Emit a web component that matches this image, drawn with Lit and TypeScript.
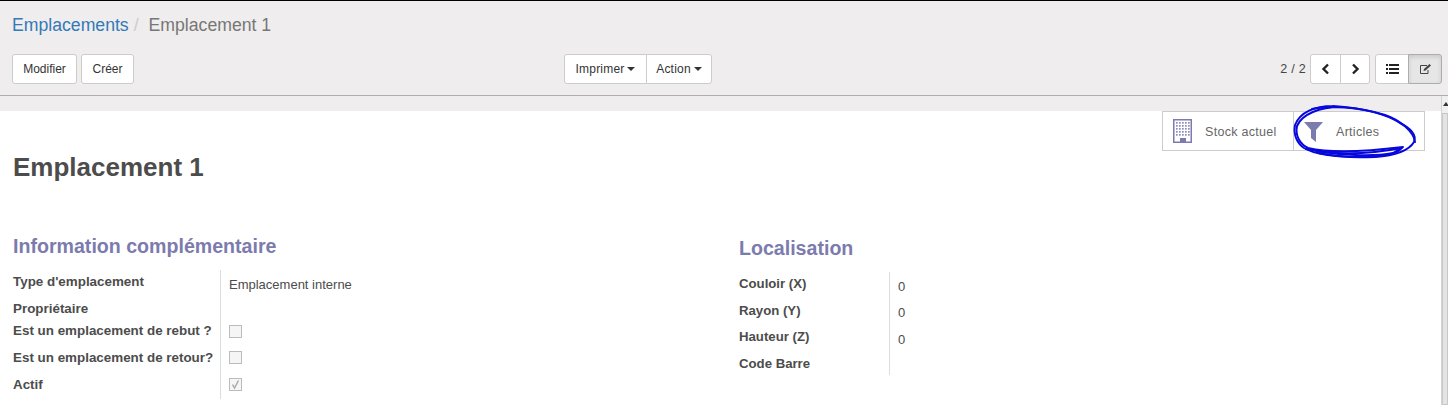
import { LitElement, html, css, svg } from "lit";
import { customElement } from "lit/decorators.js";

@customElement("app-root")
export class AppRoot extends LitElement {
  static styles = css`
    :host { display: block; width: 1448px; height: 405px; overflow: hidden; position: relative; background: #fff;
      font-family: "Liberation Sans", Arial, sans-serif; font-size: 12px; color: #4c4c4c; }
    * { box-sizing: border-box; }
    .panel { height: 96px; background: #efeded; border-top: 1px solid #000; border-bottom: 1px solid #b0aeb3; padding: 15px 6px 0 12px; }
    .crumbs { display: flex; font-size: 17.65px; line-height: 18px; height: 18px; margin-bottom: 20px; }
    .crumbs a { color: #337ab7; }
    .crumbs .sep { color: #ccc; padding: 0 10px 0 5px; }
    .crumbs .cur { color: #777; }
    .bar { display: grid; grid-template-columns: 552px auto 1fr; align-items: center; height: 30px; }
    .left { display: flex; gap: 4px; }
    .right { display: flex; justify-content: flex-end; align-items: center; }
    .btn { display: flex; align-items: center; justify-content: center; height: 30px; background: #fff; border: 1px solid #ccc; color: #333; font-size: 12px; border-radius: 3px; }
    .group { display: flex; }
    .group .btn { border-radius: 0; }
    .group .btn + .btn { margin-left: -1px; }
    .group .btn:first-child { border-radius: 3px 0 0 3px; }
    .group .btn:last-child { border-radius: 0 3px 3px 0; }
    .spaced { letter-spacing: 0.2px; }
    .caret { width: 0; height: 0; border-left: 4px solid transparent; border-right: 4px solid transparent; border-top: 4px solid #333; margin-left: 3px; }
    .pager { color: #444; font-size: 12.5px; margin-right: 4px; letter-spacing: 0.3px; }
    .views { margin-left: 5px; }
    .btn.on { background: #e6e6e6; border-color: #adadad; box-shadow: inset 0 2px 4px rgba(0,0,0,.125); }
    .strip { height: 15px; background: #efeded; margin-right: 7px; }
    .scroll { position: absolute; top: 96px; right: 0; width: 7px; height: 309px; background: #f0f0f0; border-left: 1px solid #d4d4d4; }
    .scroll svg { display: block; margin: 6px 0 0 1px; }
    .thumb { height: 292px; margin-top: 7px; background: #e4e4e4; border: 1px solid #c8c8c8; }
    .sheet { padding: 0 23px 0 13px; }
    .stats { display: flex; justify-content: flex-end; height: 41px; }
    .stat { display: flex; align-items: center; width: 132px; padding-left: 10px; height: 40px; border: 1px solid #ccc; color: #666; font-size: 12.5px; letter-spacing: 0.3px; }
    .stat + .stat { margin-left: -1px; }
    .stat svg { margin-right: 13px; }
    .stat span { padding-top: 1px; }
    .stat.b svg { margin-top: 1px; }
    .title { height: 83px; padding-top: 2px; }
    h1 { margin: 0; font-size: 26px; line-height: 26px; font-weight: 700; color: #4c4c4c; }
    .cols { display: grid; grid-template-columns: 726px 1fr; }
    h2 { margin: 0; font-size: 19.6px; line-height: 22px; font-weight: 700; color: #7c7bad; }
    .loc h2 { margin-top: 2px; }
    .grid { display: grid; margin-top: 13px; }
    .info .grid { grid-template-columns: 208px auto; }
    .loc .grid { grid-template-columns: 151px auto; }
    .k { font-weight: 700; font-size: 13.4px; line-height: 22px; padding-top: 1px; color: #4c4c4c; border-right: 1px solid #ddd; white-space: nowrap; }
    .loc .k { font-size: 13.2px; }
    .v { padding-left: 8px; font-size: 13px; line-height: 16px; color: #4c4c4c; }
    .check { width: 13px; height: 13px; border: 1px solid #bbb; background: #f5f5f5; display: block; }
    .check svg { display: block; }
    .scribble { position: absolute; left: 1290px; top: 100px; pointer-events: none; }
  `;

  private checkbox(on: boolean) {
    return html`<span class="check">${on
      ? html`<svg width="11" height="11" viewBox="0 0 11 11"><path d="M2.5 5.5 L4.5 9 L8.5 1.5" fill="none" stroke="#aaa" stroke-width="1.5"/></svg>`
      : ""}</span>`;
  }

  render() {
    const info: [string, unknown, number, number][] = [
      ["Type d'emplacement", "Emplacement interne", 27, 7],
      ["Propriétaire", "", 22, 0],
      ["Est un emplacement de rebut ?", this.checkbox(false), 27, 6],
      ["Est un emplacement de retour?", this.checkbox(false), 27, 5],
      ["Actif", this.checkbox(true), 26, 5],
    ];
    const loc: [string, string, number, number][] = [
      ["Couloir (X)", "0", 27, 7],
      ["Rayon (Y)", "0", 26, 6],
      ["Hauteur (Z)", "0", 27, 7],
      ["Code Barre", "", 23, 0],
    ];
    const row = ([k, v, h, p]: [string, unknown, number, number]) =>
      html`<div class="k" style="height:${h}px">${k}</div><div class="v" style="height:${h}px;padding-top:${p}px">${v}</div>`;
    return html`
      <div class="panel">
        <div class="crumbs"><a>Emplacements</a><span class="sep">/</span><span class="cur">Emplacement 1</span></div>
        <div class="bar">
          <div class="left">
            <div class="btn" style="width:65px">Modifier</div>
            <div class="btn" style="width:53px">Créer</div>
          </div>
          <div class="group">
            <div class="btn spaced" style="width:83px">Imprimer<span class="caret"></span></div>
            <div class="btn spaced" style="width:66px">Action<span class="caret"></span></div>
          </div>
          <div class="right">
            <span class="pager">2 / 2</span>
            <div class="group">
              <div class="btn" style="width:31px"><svg width="9" height="12" viewBox="0 0 9 12"><path d="M7 1.5 L2.5 6 L7 10.5" fill="none" stroke="#222" stroke-width="2.4"/></svg></div>
              <div class="btn" style="width:30px"><svg width="9" height="12" viewBox="0 0 9 12"><path d="M2 1.5 L6.5 6 L2 10.5" fill="none" stroke="#222" stroke-width="2.4"/></svg></div>
            </div>
            <div class="group views">
              <div class="btn" style="width:34px"><svg width="13" height="10" viewBox="0 0 13 10"><path d="M0 0h2v2H0zM3 0h10v2H3zM0 4h2v2H0zM3 4h10v2H3zM0 8h2v2H0zM3 8h10v2H3z" fill="#222"/></svg></div>
              <div class="btn on" style="width:34px"><svg width="13" height="12" viewBox="0 0 13 12"><path d="M8 2.5H1.5V10.5H9V7" fill="none" stroke="#444" stroke-width="1"/><path d="M4.5 8 L5 6 L10.5 1 L12 2.5 L6.5 7.5 Z" fill="#444"/></svg></div>
            </div>
          </div>
        </div>
      </div>
      <div class="strip"></div>
      <div class="scroll"><svg width="6" height="4" viewBox="0 0 6 4"><path d="M3 0 L6 4 H0 Z" fill="#333"/></svg><div class="thumb"></div></div>
      <div class="sheet">
        <div class="stats">
          <div class="stat a">
            <svg width="19" height="24" viewBox="0 0 19 24">
              <path d="M0 0h19v24H0z" fill="#7c7bad"/>
              <path d="M1.5 1.5h16v21h-16z" fill="#fff"/>
              ${[3, 6, 9, 12, 15].flatMap((x) => [3, 6, 9, 12, 15].map((y) => svg`<rect x=${x} y=${y} width="1.7" height="1.7" fill="#8d8cba"/>`))}
              <rect x="7" y="19" width="6" height="5" fill="#7c7bad"/>
            </svg>
            <span>Stock actuel</span>
          </div>
          <div class="stat b">
            <svg width="19" height="20" viewBox="0 0 19 20"><path d="M0 0H19L12 8V20L7 16V8Z" fill="#7c7bad"/></svg>
            <span>Articles</span>
          </div>
        </div>
        <div class="title"><h1>Emplacement 1</h1></div>
        <div class="cols">
          <div class="info">
            <h2>Information complémentaire</h2>
            <div class="grid">${info.map(row)}</div>
          </div>
          <div class="loc">
            <h2>Localisation</h2>
            <div class="grid">${loc.map(row)}</div>
          </div>
        </div>
      </div>
      <svg class="scribble" width="130" height="62" viewBox="0 0 130 62" fill="none" stroke="#0808dc" stroke-width="2" stroke-linecap="round" stroke-linejoin="round">
        <path d="M43 6 C25 6 10 12 5 25 C3 36 8 44 14 48 C30 57 60 58 85 57 C100 56 118 52 124 42 C127 35 120 28 110 23 C95 13 72 8 43 6"/>
        <path d="M50 7 C30 7 12 14 7 26 C5 36 10 44 18 48 C40 53 80 51 113 47 L103 53 C82 57 50 55 26 51"/>
        <path d="M22 9 C38 5 70 7 95 15 C110 20 124 32 125 42"/>
        <path d="M16 49 C45 55 80 54 112 48 C108 53 100 55 90 56 C70 58 45 56 28 53"/>
      </svg>
    `;
  }
}
